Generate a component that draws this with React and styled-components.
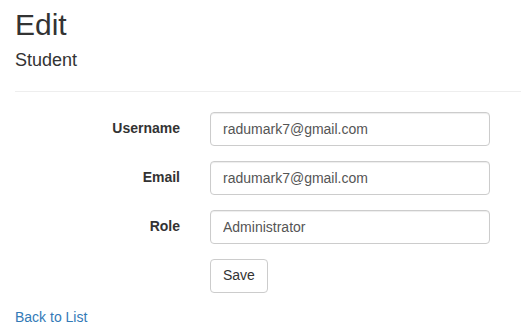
import React from "react";
import styled, {createGlobalStyle} from "styled-components";

const GlobalStyle = createGlobalStyle`
html, body {
margin: 0;
overflow: hidden;
}
body {
font-family: "Liberation Sans", Arial, sans-serif;
font-size: 14px;
line-height: 1.42857;
color: #333;
background-color: #fff;
}
* {
box-sizing: border-box;
}
`;

const Container = styled.div`
padding: 8px 0 0 15px;
`;

const Title = styled.h2`
font-size: 30px;
font-weight: 500;
line-height: 1.1;
margin: 0 0 10px 0;
`;

const SubTitle = styled.h4`
font-size: 18px;
font-weight: 500;
line-height: 1.1;
margin: 10px 0 10px 0;
`;

const Rule = styled.hr`
margin: 20px 0;
border: 0;
border-top: 1px solid #eee;
`;

const Form = styled.form`
margin-left: -15px;
`;

const FormGroup = styled.div`
display: flex;
margin-bottom: 15px;
`;

const Label = styled.label`
width: 195px;
padding: 7px 15px 0 15px;
text-align: right;
font-weight: bold;
`;

const Field = styled.div`
padding-left: ${(p) => (p.$offset ? "210px" : "15px")};
`;

const Input = styled.input`
display: block;
width: 280px;
height: 34px;
padding: 6px 12px;
font-family: inherit;
font-size: 14px;
line-height: 1.42857;
color: #555;
background-color: #fff;
border: 1px solid #ccc;
border-radius: 4px;
box-shadow: inset 0 1px 1px rgba(0, 0, 0, .075);
outline: 0;
`;

const Button = styled.button`
height: 34px;
padding: 6px 12px;
font-family: inherit;
font-size: 14px;
line-height: 1.42857;
color: #333;
background-color: #fff;
border: 1px solid #ccc;
border-radius: 4px;
cursor: pointer;
`;

const BackLink = styled.a`
color: #337ab7;
text-decoration: none;
`;

const fields = [
  {label: "Username", value: "radumark7@gmail.com"},
  {label: "Email", value: "radumark7@gmail.com"},
  {label: "Role", value: "Administrator"},
];

const App = () => {
  return (
    <Container>
      <GlobalStyle />
      <Title>Edit</Title>
      <SubTitle>Student</SubTitle>
      <Rule />
      <Form onSubmit={(e) => e.preventDefault()}>
        {fields.map((f) => (
          <FormGroup key={f.label}>
            <Label>{f.label}</Label>
            <Field>
              <Input type="text" defaultValue={f.value} />
            </Field>
          </FormGroup>
        ))}
        <FormGroup>
          <Field $offset>
            <Button type="submit">Save</Button>
          </Field>
        </FormGroup>
      </Form>
      <div>
        <BackLink href="#">Back to List</BackLink>
      </div>
    </Container>
  )
};

export default App;
